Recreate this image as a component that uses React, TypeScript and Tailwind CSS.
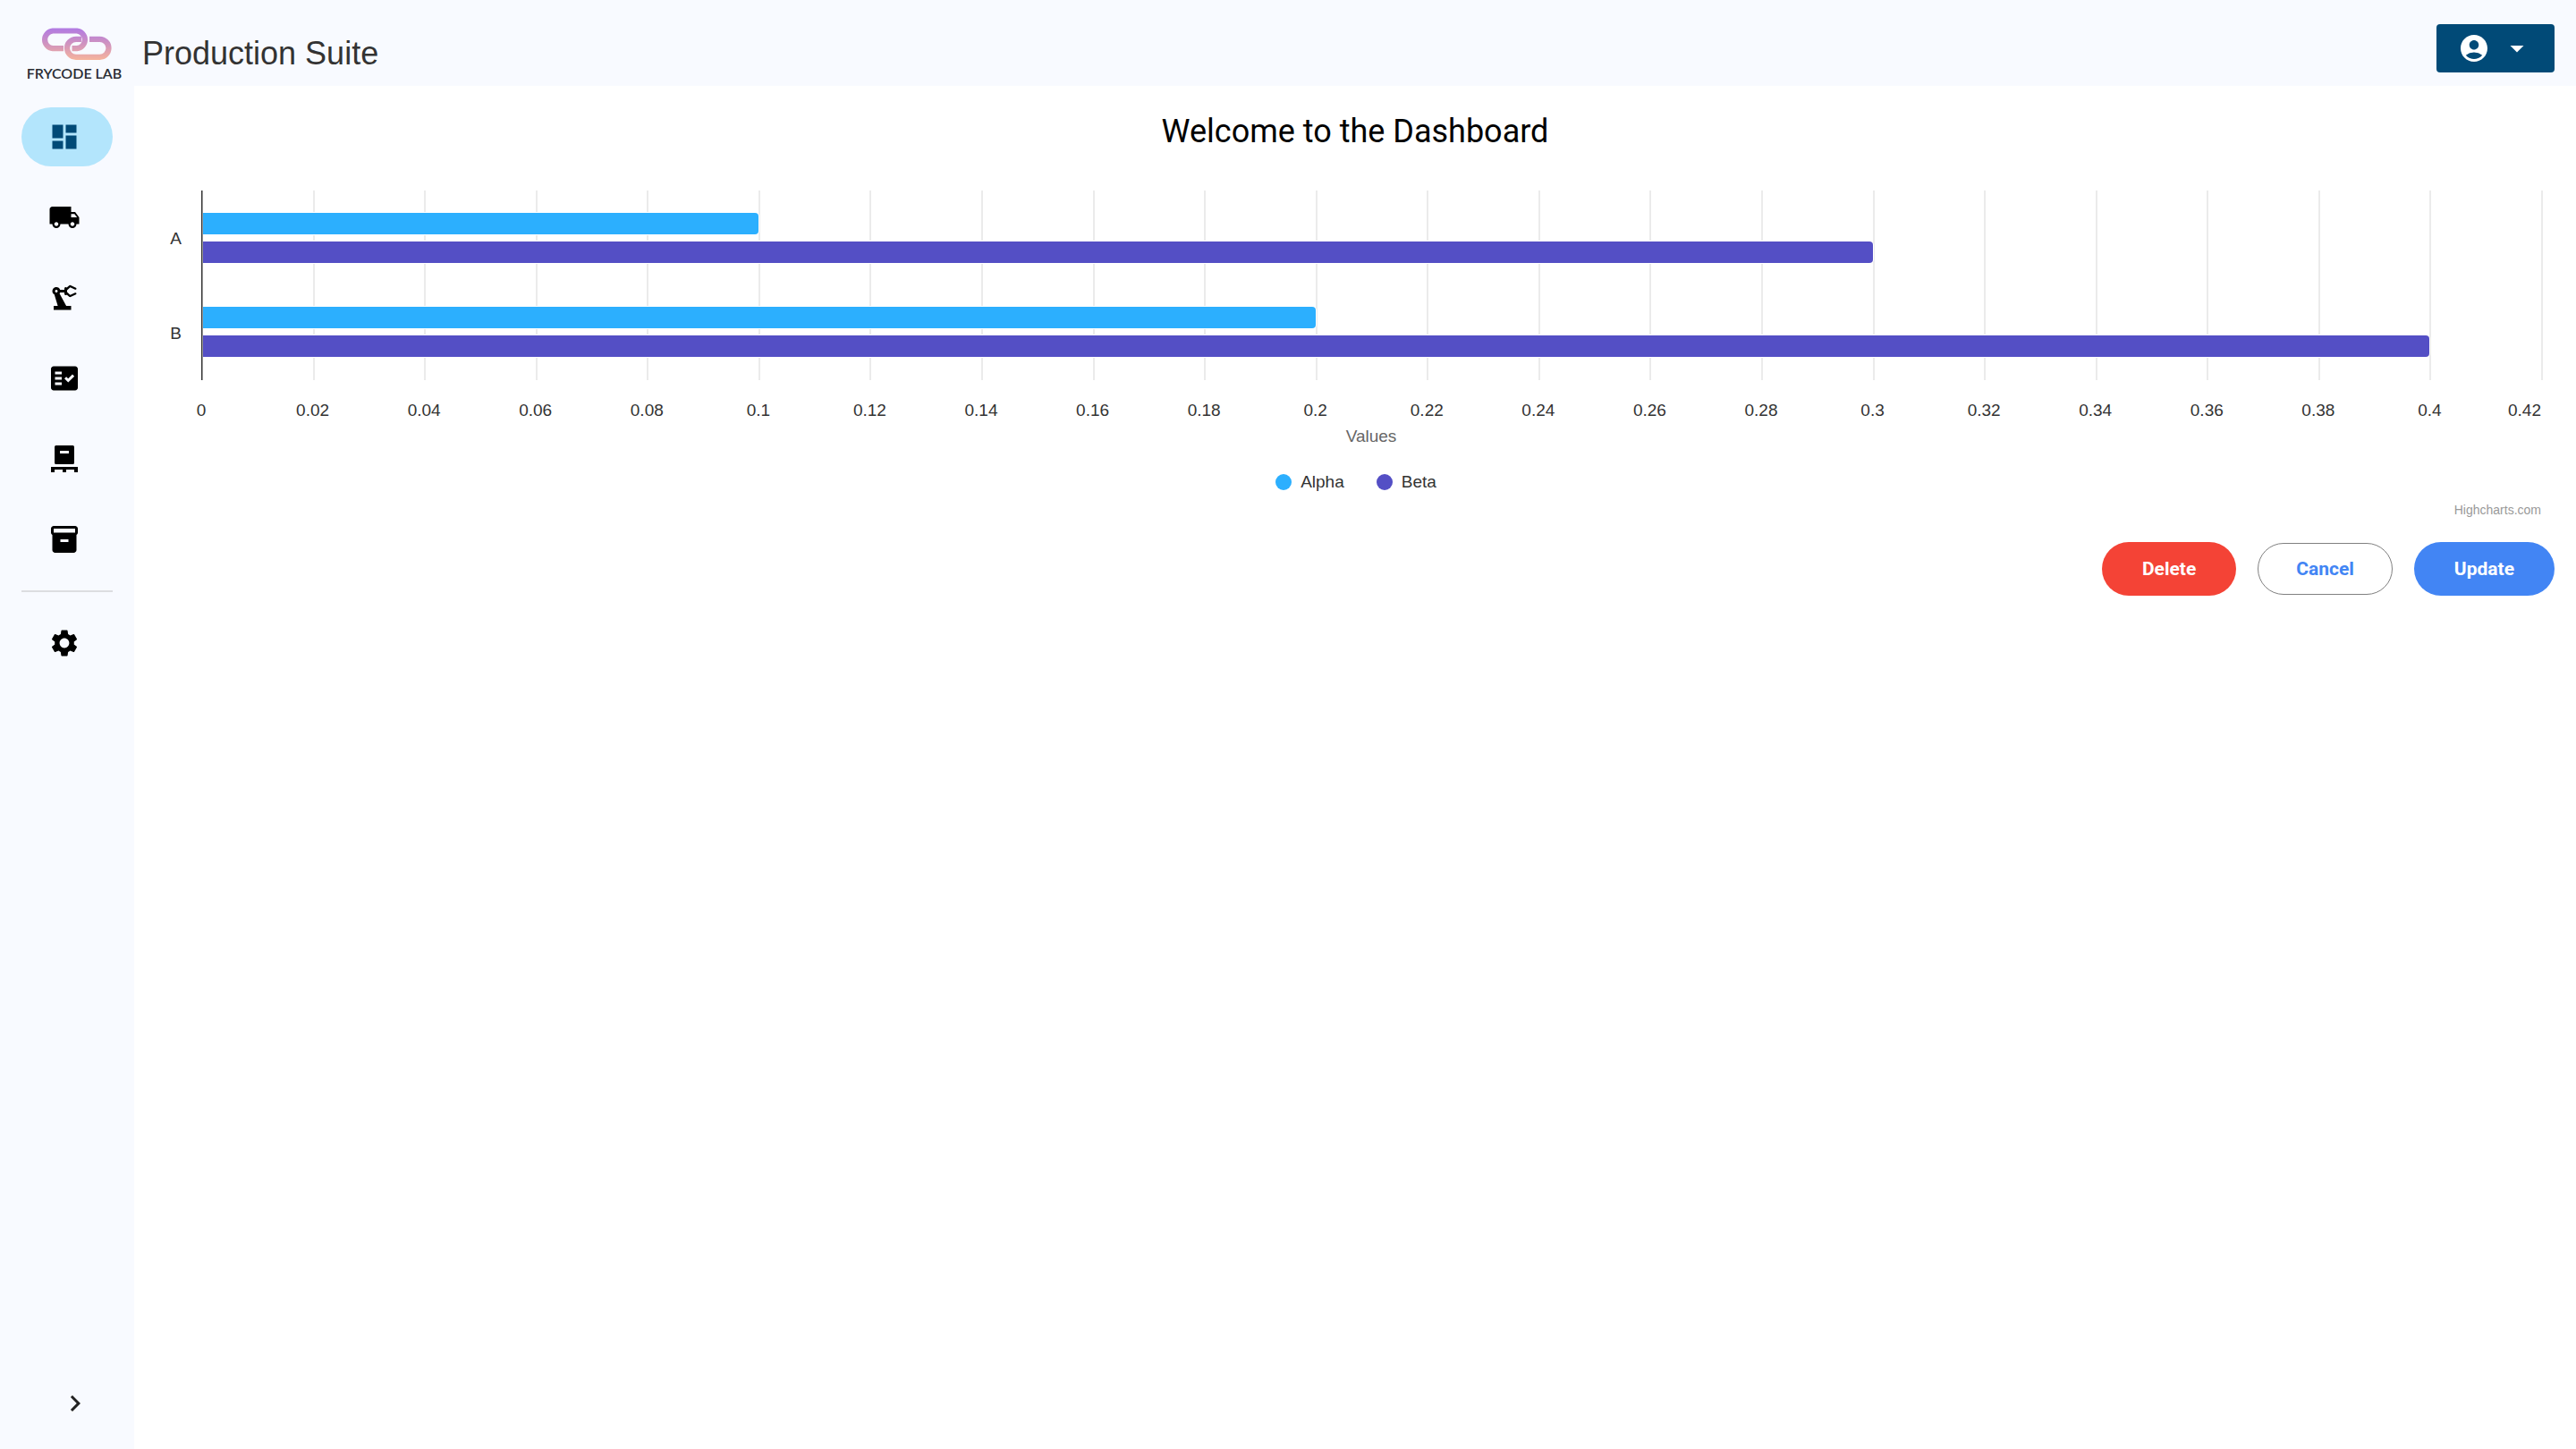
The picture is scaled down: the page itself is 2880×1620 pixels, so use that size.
import type { ReactNode } from "react";
import {
  MdAccountCircle,
  MdArrowDropDown,
  MdChevronRight,
  MdDashboard,
  MdFactCheck,
  MdInventory2,
  MdLocalShipping,
  MdPrecisionManufacturing,
  MdSettings,
} from "react-icons/md";

const ARIAL = "font-['Liberation_Sans',Arial,sans-serif]";

function Logo() {
  return (
    <a href="#home" aria-label="Frycode Lab" className="flex w-[110px] flex-col items-center pt-[3px]">
      <svg viewBox="0 0 79 36" className="ml-1 h-9 w-[79px]" fill="none" aria-hidden="true">
        <defs>
          <linearGradient id="chain" x1="0" y1="0" x2="0" y2="36" gradientUnits="userSpaceOnUse">
            <stop offset="0" stopColor="#b079e4" />
            <stop offset="0.5" stopColor="#d093bf" />
            <stop offset="1" stopColor="#f6b49c" />
          </linearGradient>
        </defs>
        <g stroke="url(#chain)" strokeWidth="6.2">
          <path d="M25 23.200H13A9.900 9.900 0 0 1 13 3.500H40A9.900 9.900 0 0 1 40 23.200H34.500" />
          <path d="M45 12.800H39A10 10 0 0 0 39 32.800H65.500A10 10 0 0 0 65.500 12.800H54" />
        </g>
      </svg>
      <span className="mt-[5px] font-[Lato,sans-serif] text-[16px] leading-5 font-semibold whitespace-nowrap text-[#2a2c33]">
        FRYCODE LAB
      </span>
    </a>
  );
}

function PalletIcon() {
  return (
    <svg viewBox="0 0 24 24" className="size-9" fill="currentColor" aria-hidden="true">
      <path
        fillRule="evenodd"
        d="M5.700 2h12.600a1 1 0 0 1 1 1v12a1 1 0 0 1-1 1H5.700a1 1 0 0 1-1-1V3a1 1 0 0 1 1-1zM8.700 6v2h6.600V6z"
      />
      <path d="M2 18h20v4h-2.700v-2h-6v2h-2.600v-2h-6v2H2z" />
    </svg>
  );
}

function NavItem({ label, active, children }: { label: string; active?: boolean; children: ReactNode }) {
  return (
    <a
      href={`#${label.toLowerCase()}`}
      aria-label={label}
      aria-current={active ? "page" : undefined}
      className={`flex h-[66px] items-center rounded-full pl-[30px] ${
        active ? "bg-[#b3e5fc] text-[#014a77]" : "text-black"
      }`}
    >
      {children}
    </a>
  );
}

const MAX = 0.42;
const TICKS = Array.from({ length: 22 }, (_, i) => Number((i * 0.02).toFixed(2)));
const GROUPS = [
  { name: "A", alpha: 0.1, beta: 0.3 },
  { name: "B", alpha: 0.2, beta: 0.4 },
];

function BarChart() {
  return (
    <figure className={`pr-[15px] text-[19px] leading-6 text-[#333333] ${ARIAL}`}>
      <div className="flex">
        <div className="flex w-[51px] flex-col pr-[22px]">
          {GROUPS.map((g) => (
            <span key={g.name} className="flex h-[106px] items-center justify-end pt-0.5">
              {g.name}
            </span>
          ))}
        </div>
        <div className="relative flex-1">
          <div className="absolute inset-0">
            {TICKS.slice(1).map((t) => (
              <div
                key={t}
                className="absolute inset-y-0 w-0.5 bg-[#ebebeb]"
                style={{ left: `${(t / MAX) * 100}%` }}
              />
            ))}
          </div>
          <div className="relative">
            {GROUPS.map((g) => (
              <div key={g.name} className="flex h-[105px] flex-col gap-2 pt-[25px]">
                <div
                  className="h-6 rounded-r bg-[#2caffe] ring-1 ring-white"
                  style={{ width: `${(g.alpha / MAX) * 100}%` }}
                />
                <div
                  className="h-6 rounded-r bg-[#544fc5] ring-1 ring-white"
                  style={{ width: `${(g.beta / MAX) * 100}%` }}
                />
              </div>
            ))}
          </div>
          <div className="absolute inset-y-0 left-0 w-0.5 border-l border-[#333333] bg-[#999999]" />
        </div>
      </div>
      <div className="relative mt-[22px] ml-[51px] h-6">
        {TICKS.map((t) => (
          <span
            key={t}
            className={`absolute top-0 ${t === MAX ? "-translate-x-full" : "-translate-x-1/2"}`}
            style={{ left: `${(t / MAX) * 100}%` }}
          >
            {t}
          </span>
        ))}
      </div>
      <p className="mt-[5px] ml-[51px] text-center text-[#666666]">Values</p>
      <figcaption className="mt-[27px] ml-[17px] flex justify-center gap-9">
        <span className="flex items-center gap-[10px]">
          <i className="size-[18px] rounded-full bg-[#2caffe]" />
          Alpha
        </span>
        <span className="flex items-center gap-[10px]">
          <i className="size-[18px] rounded-full bg-[#544fc5]" />
          Beta
        </span>
      </figcaption>
      <p className="mt-[9px] text-right text-[14px] leading-5 text-[#999999]">
        <a href="https://www.highcharts.com">Highcharts.com</a>
      </p>
    </figure>
  );
}

export default function App() {
  return (
    <div className="flex min-h-screen flex-col bg-[#f8faff] font-[Roboto,sans-serif]">
      <header className="flex h-24 items-center justify-between pr-6 pl-7">
        <div className="flex items-center gap-[21px] pt-6">
          <Logo />
          <h1 className={`text-[36px] leading-10 text-[#333333] ${ARIAL}`}>Production Suite</h1>
        </div>
        <button
          type="button"
          aria-label="Account"
          className="mt-3 flex h-[54px] items-center gap-3 rounded bg-[#014a77] px-6 text-white"
        >
          <MdAccountCircle className="size-9" />
          <MdArrowDropDown className="size-9" />
        </button>
      </header>
      <div className="flex flex-1">
        <nav className="flex w-[150px] shrink-0 flex-col gap-6 px-6 pt-6 pb-[33px]">
          <NavItem label="Dashboard" active>
            <MdDashboard className="size-9" />
          </NavItem>
          <NavItem label="Shipping">
            <MdLocalShipping className="size-9" />
          </NavItem>
          <NavItem label="Manufacturing">
            <MdPrecisionManufacturing className="size-9" />
          </NavItem>
          <NavItem label="Checks">
            <MdFactCheck className="size-9" />
          </NavItem>
          <NavItem label="Pallets">
            <PalletIcon />
          </NavItem>
          <NavItem label="Inventory">
            <MdInventory2 className="size-9" />
          </NavItem>
          <hr className="border-t-2 border-[#dcdde0]" />
          <NavItem label="Settings">
            <MdSettings className="size-9" />
          </NavItem>
          <button type="button" aria-label="Expand menu" className="mt-auto flex justify-end pr-6 text-[#212121]">
            <MdChevronRight className="size-9" />
          </button>
        </nav>
        <main className="min-w-0 flex-1 bg-white px-6 pt-6">
          <h2 className="text-center text-[36px] leading-[54px] text-black">Welcome to the Dashboard</h2>
          <div className="mt-[39px]">
            <BarChart />
          </div>
          <div className="mt-[26px] flex items-center justify-end gap-6 text-[21px] leading-6 font-bold">
            <button type="button" className="h-[60px] rounded-full bg-[#f44336] px-[45px] text-white">
              Delete
            </button>
            <button
              type="button"
              className="h-[58px] rounded-full border border-[#808080] bg-white px-[42px] text-[#4285f4]"
            >
              Cancel
            </button>
            <button type="button" className="h-[60px] rounded-full bg-[#4285f4] px-[45px] text-white">
              Update
            </button>
          </div>
        </main>
      </div>
    </div>
  );
}
